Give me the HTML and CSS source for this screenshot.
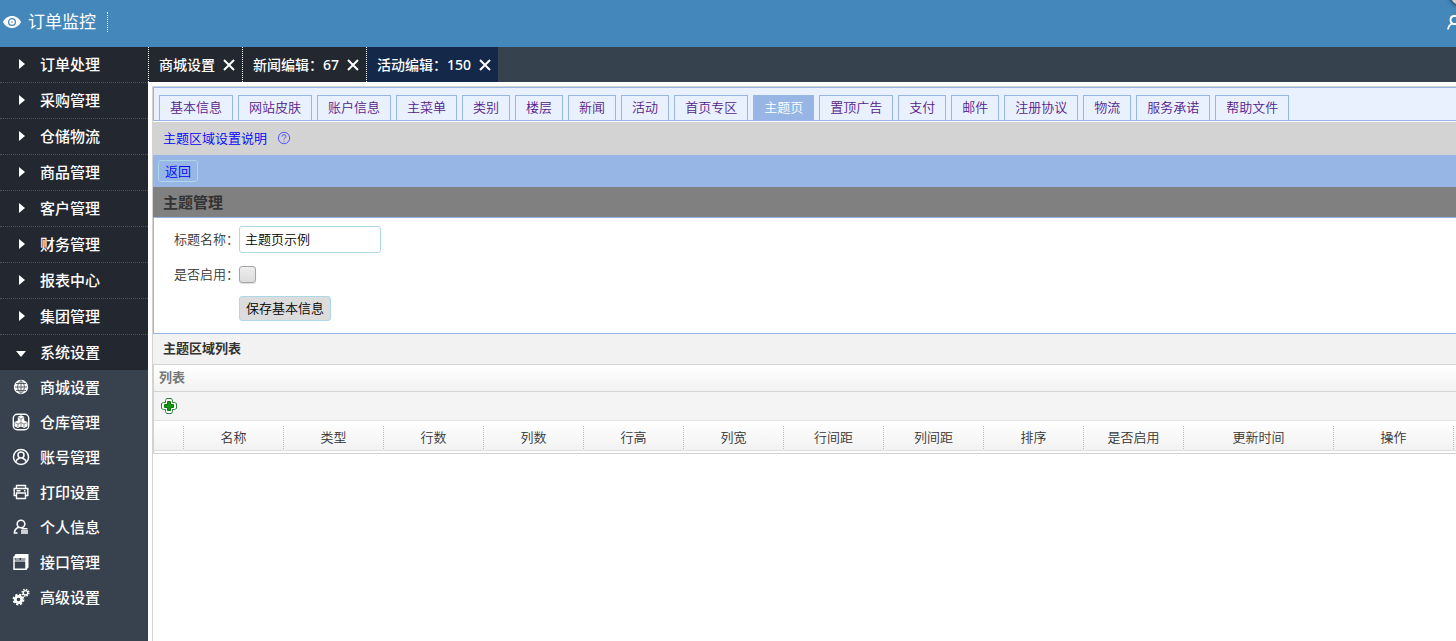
FILE: index.html
```html
<!DOCTYPE html>
<html lang="zh-CN">
<head>
<meta charset="utf-8">
<title>商城设置</title>
<link rel="stylesheet" href="styles.css">
</head>
<body>
<header class="topbar">
  <a class="topbar-link" href="#">
    <svg class="eye" viewBox="0 0 18 12"><path fill="#fff" d="M9 0C5 0 1.700 2.400 0 6c1.700 3.600 5 6 9 6s7.300-2.400 9-6c-1.700-3.600-5-6-9-6z"/><circle cx="9" cy="6" r="3.400" fill="none" stroke="#48b" stroke-width="1.300"/><circle cx="9" cy="6" r="1" fill="#9cc0dd"/></svg>
    <span class="topbar-text">订单监控</span>
  </a>
  <svg class="user-cut" viewBox="0 0 9 15"><path fill="none" stroke="#fff" stroke-width="1.800" d="M9 1H6.500Q3.500 1.600 3.500 5T6.500 9H9M5.500 8.500Q1.500 10 1 14.500"/></svg>
  <span class="corner"></span>
</header>
<div class="shell">
  <nav class="sidebar">
    <ul class="groups">
      <li><a href="#"><i class="caret"></i>订单处理</a></li>
      <li><a href="#"><i class="caret"></i>采购管理</a></li>
      <li><a href="#"><i class="caret"></i>仓储物流</a></li>
      <li><a href="#"><i class="caret"></i>商品管理</a></li>
      <li><a href="#"><i class="caret"></i>客户管理</a></li>
      <li><a href="#"><i class="caret"></i>财务管理</a></li>
      <li><a href="#"><i class="caret"></i>报表中心</a></li>
      <li><a href="#"><i class="caret"></i>集团管理</a></li>
      <li><a href="#"><i class="caret caret-open"></i>系统设置</a></li>
    </ul>
    <ul class="items">
      <li><a href="#"><svg viewBox="0 0 18 18"><circle cx="9" cy="9" r="7.200" fill="#fff"/><path fill="none" stroke="#37424e" stroke-width=".8" d="M9 3v12M3 9h12M4 5.500h10M4 12.500h10M9 2.500C4.500 5.500 4.500 12.500 9 15.500M9 2.500c4.500 3 4.500 10 0 13"/></svg>商城设置</a></li>
      <li><a href="#"><svg viewBox="0 0 18 18"><rect x="1.300" y="1.300" width="15.400" height="15.400" rx="4" fill="none" stroke="#fff" stroke-width="1.400"/><path fill="#fff" d="M9 2.200l3.200 1.600v3.700l3.300 1.500v4.200l-3.300 1.700L9 13.500l-3.200 1.400-3.300-1.700V9l3.300-1.500V3.800z"/><path fill="none" stroke="#37424e" stroke-width=".6" d="M6.300 4.500L9 6l2.700-1.500M9 6v2.500M3.300 9.700L6 11l3-1.500 3 1.500 2.700-1.300M6 11v3M12 11v3M9 9.500V13"/></svg>仓库管理</a></li>
      <li><a href="#"><svg viewBox="0 0 18 18"><g fill="none" stroke="#fff" stroke-width="1.500"><circle cx="9" cy="9" r="7.500"/><circle cx="9" cy="7" r="3"/><path d="M3.500 14Q5 10.700 7.800 10.200M14.500 14Q13 10.700 10.200 10.200"/></g></svg>账号管理</a></li>
      <li><a href="#"><svg viewBox="0 0 18 18"><g fill="none" stroke="#fff" stroke-width="1.400"><path d="M4.500 5V2.500h9V5M4.500 12.500h-2.300V5.500h13.600v7h-2.300M4.500 10h9v5.500h-9zM4.500 7.700h4"/><path d="M12 7.700h1.500"/></g></svg>打印设置</a></li>
      <li><a href="#"><svg viewBox="0 0 18 18"><g fill="none" stroke="#fff" stroke-width="1.600"><circle cx="9" cy="6" r="3.800"/><path d="M6.800 9.200Q2.500 10.500 2.300 15.500M2 15h3.500"/><path stroke-width="1.500" d="M9.500 10.700h6M9 12.900h7M9 15.100h7"/></g></svg>个人信息</a></li>
      <li><a href="#"><svg viewBox="0 0 18 18"><path fill="#fff" d="M3.500 1h13v13.500l-2.500 2.500V4.500H1.500z"/><path fill="none" stroke="#fff" stroke-width="1.500" d="M2 4.300h12v12H2z"/><path stroke="#fff" stroke-width="1.200" d="M2 8h12M3.500 6h4M9 6h4"/></svg>接口管理</a></li>
      <li><a href="#"><svg viewBox="0 0 18 18"><g fill="none" stroke="#fff"><circle cx="6.500" cy="11.500" r="3.200" stroke-width="2.800"/><circle cx="6.500" cy="11.500" r="5" stroke-width="1.800" stroke-dasharray="2.200 1.727"/><circle cx="13.500" cy="4.800" r="2.200" stroke-width="1.300"/><circle cx="13.500" cy="4.800" r="3.400" stroke-width="1.400" stroke-dasharray="1.400 1.270"/></g></svg>高级设置</a></li>
    </ul>
  </nav>
  <main class="main">
    <div class="pages">
      <div class="page"><a href="#">商城设置</a><button type="button" aria-label="关闭"><svg viewBox="0 0 12 12"><path d="M1 1l10 10M11 1L1 11"/></svg></button></div>
      <div class="page"><a href="#">新闻编辑：67</a><button type="button" aria-label="关闭"><svg viewBox="0 0 12 12"><path d="M1 1l10 10M11 1L1 11"/></svg></button></div>
      <div class="page page-active"><a href="#">活动编辑：150</a><button type="button" aria-label="关闭"><svg viewBox="0 0 12 12"><path d="M1 1l10 10M11 1L1 11"/></svg></button></div>
    </div>
    <div class="content">
      <nav class="tabs">
        <a href="#">基本信息</a><a href="#">网站皮肤</a><a href="#">账户信息</a><a href="#">主菜单</a><a href="#">类别</a><a href="#">楼层</a><a href="#">新闻</a><a href="#">活动</a><a href="#">首页专区</a><a class="tab-active" href="#">主题页</a><a href="#">置顶广告</a><a href="#">支付</a><a href="#">邮件</a><a href="#">注册协议</a><a href="#">物流</a><a href="#">服务承诺</a><a href="#">帮助文件</a>
      </nav>
      <div class="help"><a href="#">主题区域设置说明<svg viewBox="0 0 14 14"><circle cx="7" cy="7" r="5.700"/><path d="M5 5.600Q5 3.700 7 3.700T9 5.500Q9 6.300 7.900 6.900T7 8.400M7 9.500v1.200"/></svg></a></div>
      <div class="toolbar"><a class="back" href="#">返回</a></div>
      <h1 class="title">主题管理</h1>
      <form class="form">
        <label for="name">标题名称：</label><input class="text" id="name" type="text" value="主题页示例">
        <label for="enabled">是否启用：</label><input class="check" id="enabled" type="checkbox">
        <button class="save" type="button">保存基本信息</button>
      </form>
      <h2 class="subtitle">主题区域列表</h2>
      <section class="grid">
        <h3 class="grid-title">列表</h3>
        <div class="grid-tools"><button type="button" aria-label="添加"><svg viewBox="0 0 16 16"><path fill="#fff" stroke="#2f7d3b" d="M4.500 2.500l1-2h5l1 2v2h2l2 1v5l-2 1h-2v2l-1 2h-5l-1-2v-2h-2l-2-1v-5l2-1h2z"/><path fill="#169616" stroke="#087808" d="M6.500 3.500h3v3h3v3h-3v3h-3v-3h-3v-3h3z"/></svg></button></div>
        <div class="grid-scroll">
          <table>
            <colgroup><col class="c-num"><col span="10" class="c-std"><col class="c-time"><col class="c-act"></colgroup>
            <thead><tr><th><span></span></th><th><span>名称</span></th><th><span>类型</span></th><th><span>行数</span></th><th><span>列数</span></th><th><span>行高</span></th><th><span>列宽</span></th><th><span>行间距</span></th><th><span>列间距</span></th><th><span>排序</span></th><th><span>是否启用</span></th><th><span>更新时间</span></th><th><span>操作</span></th></tr></thead>
          </table>
        </div>
      </section>
    </div>
  </main>
</div>
</body>
</html>
```
FILE: styles.css
```css
* { box-sizing: border-box; }
body {
  margin: 0;
  min-height: 100vh;
  display: flex;
  flex-direction: column;
  overflow: hidden;
  background: #fff;
  font: 350 13px/20px "Noto Sans CJK SC", "Noto Sans", sans-serif;
  color: #333;
}
a { text-decoration: none; color: inherit; }
ul { list-style: none; margin: 0; padding: 0; }
h1, h2, h3 { margin: 0; }
button { padding: 0; border: 0; background: none; font: inherit; cursor: pointer; }
svg { display: block; flex: none; }

.topbar {
  position: relative;
  display: flex;
  justify-content: space-between;
  align-items: center;
  height: 47px;
  padding-bottom: 3px;
  background: #4488bb;
  overflow: hidden;
}
.topbar-link {
  display: flex;
  align-items: center;
  gap: 7px;
  height: 20px;
  padding: 0 11px 0 3px;
  border-right: 1px dotted #fff;
  color: #fff;
  font-size: 17px;
  font-weight: 400;
}
.topbar-text { padding-bottom: 2px; }
.eye { width: 18px; height: 12px; }
.user-cut { width: 9px; height: 15px; }
.corner {
  position: absolute;
  top: -13px;
  right: -13px;
  width: 18px;
  height: 18px;
  border-radius: 50%;
  background: #ccc;
  box-shadow: 0 0 4px 1px #234;
}

.shell { flex: 1; display: flex; }
.sidebar {
  flex: none;
  width: 148px;
  background: #37424e;
  color: #fff;
  font-size: 15px;
  font-weight: 500;
}
.groups { background: #23272f; }
.groups li { height: 36px; border-bottom: 1px dotted #47566c; }
.groups li:last-child { height: 35px; border-bottom: 0; }
.sidebar a { display: flex; align-items: center; height: 100%; padding-bottom: 2px; }
.caret {
  width: 6px;
  margin: 0 15px 0 19px;
  border: 5px solid transparent;
  border-left: 6px solid #fff;
  border-right: 0;
}
.caret-open {
  width: 10px;
  margin: 4px 14px 0 16px;
  border: 5px solid transparent;
  border-top: 6px solid #fff;
  border-bottom: 0;
}
.items li { height: 35px; }
.items svg { width: 18px; height: 18px; margin: 1px 10px 0 12px; }

.main { flex: 1; min-width: 0; display: flex; flex-direction: column; }
.pages {
  display: flex;
  height: 35px;
  background: #37424f;
}
.page {
  display: flex;
  align-items: center;
  gap: 8px;
  padding: 0 7px 0 10px;
  background: #23272f;
  border-left: 1px dotted #fff;
  color: #fff;
  font-family: "Noto Sans", "Noto Sans CJK SC", sans-serif;
  font-size: 14px;
  font-weight: 500;
}
.page svg { width: 12px; height: 12px; fill: none; stroke: #fff; stroke-width: 2; }
.page-active { background: #14284a; }

.content {
  flex: 1;
  margin: 4px 0 0 4px;
  border: 1px solid #d3d3d3;
  border-width: 1px 0 0 1px;
}
.tabs {
  display: flex;
  gap: 5px;
  height: 34px;
  padding: 7px 0 0 5px;
  margin-bottom: 1px;
  background: #e9f1ff;
  border: 1px solid #97b6e6;
  border-right: 0;
}
.tabs a {
  flex: none;
  padding: 0 10px;
  border: 1px solid #97b6e6;
  border-bottom: 0;
  line-height: 22px;
  color: #551a8b;
}
.tabs .tab-active { background: #97b6e6; color: #fff; }
.help { padding: 6px 0 7px 10px; background: #d3d3d3; color: #00f; }
.help a { display: inline-flex; align-items: center; gap: 10px; vertical-align: top; }
.help svg { width: 14px; height: 14px; fill: none; stroke: #55f; }
.toolbar { display: flex; padding: 5px; background: #97b6e6; }
.back {
  padding: 0 6px;
  border: 1px solid #add8e6;
  border-radius: 3px;
  color: #00f;
}
.title {
  padding: 5px 10px;
  background: #808080;
  font-size: 15px;
  line-height: 20px;
}
.form {
  display: grid;
  grid-template-columns: 65px 1fr;
  grid-template-rows: 27px 27px 25px;
  row-gap: 8px;
  align-items: center;
  padding: 8px 0 12px 20px;
  border: 1px solid #97b6e6;
  border-right: 0;
}
.form label { padding-bottom: 2px; }
.text {
  width: 142px;
  height: 27px;
  padding: 0 5px 2px;
  border: 1px solid #add8e6;
  border-radius: 3px;
  font: inherit;
  color: #000;
}
.check {
  appearance: none;
  width: 17px;
  height: 17px;
  margin: 0;
  border: 1px solid #a5a5a5;
  border-radius: 3px;
  background: linear-gradient(#eee, #dcdcdc);
  box-shadow: 0 1px 1px #ddd;
}
.save {
  grid-column: 2;
  justify-self: start;
  height: 25px;
  padding: 0 6px 2px;
  border: 1px solid #add8e6;
  border-radius: 3px;
  background: #dcdcdc;
  color: #000;
}
.subtitle {
  padding: 4px 10px 6px;
  background: #f2f2f2;
  font-size: 13px;
  line-height: 20px;
}
.grid { border: 1px solid #d3d3d3; border-right: 0; padding-bottom: 2px; }
.grid-title {
  padding: 2px 5px 4px;
  border-bottom: 1px solid #d3d3d3;
  background: linear-gradient(#fff, #f2f2f2);
  font-size: 13px;
  line-height: 20px;
  color: #777;
}
.grid-tools { padding: 6px 7px; background: #f4f4f4; border-bottom: 1px solid #e2e2e2; }
.grid-tools button { display: block; }
.grid-tools svg { width: 16px; height: 16px; }
.grid-scroll {
  overflow: hidden;
  background: linear-gradient(#fff, #f2f2f2);
  border-bottom: 1px solid #ddd;
}
table { table-layout: fixed; width: 1300px; border-collapse: collapse; }
.c-num { width: 30px; }
.c-std { width: 100px; }
.c-time { width: 150px; }
.c-act { width: 120px; }
th { padding: 5px 0 1px; font-weight: 350; }
th span { display: block; height: 23px; line-height: 21px; border-right: 1px dotted #bbb; }
```
